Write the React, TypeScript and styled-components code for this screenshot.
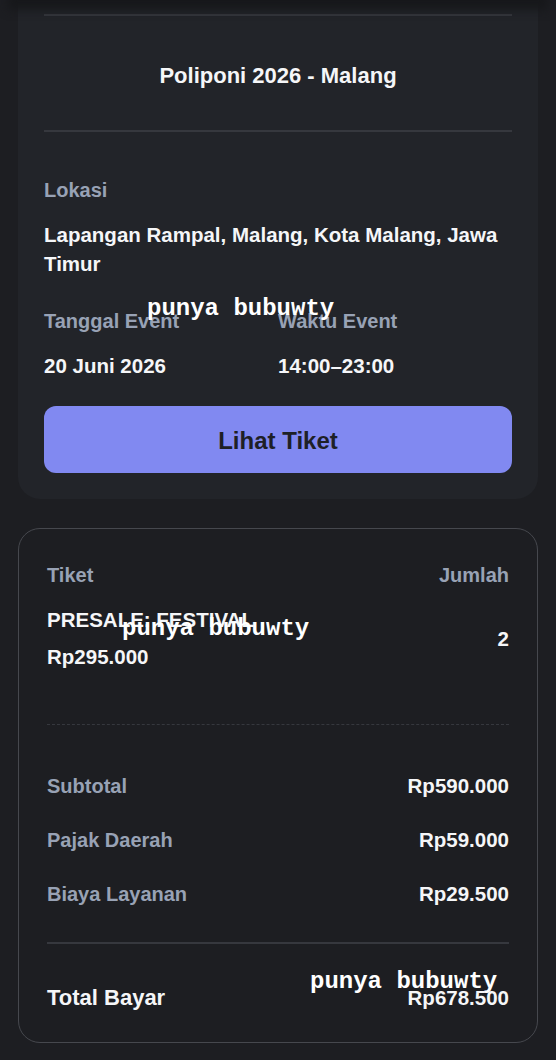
import React from 'react'
import styled, { createGlobalStyle } from 'styled-components'

const colors = {
  page: '#1d1e22',
  card: '#222429',
  line: '#36383e',
  border: '#46484e',
  label: '#98a2b5',
  white: '#f5f6f8',
  accent: '#8189f1',
  dark: '#1e2026',
}

const GlobalStyle = createGlobalStyle`
  * { box-sizing: border-box; }
  html, body {
    margin: 0;
    padding: 0;
    background: ${colors.page};
  }
  body {
    font-family: 'Liberation Sans', Arial, sans-serif;
    -webkit-font-smoothing: antialiased;
  }
`

const PageWrapper = styled.div`
  position: relative;
  min-height: 1060px;
  padding: 0 18px 20px;
  background: ${colors.page};
  overflow: hidden;
`

const TopShade = styled.div`
  height: 0;
  box-shadow: 0 0 10px 10px #17181b;
  position: relative;
  z-index: 1;
`

const EventCard = styled.section`
  background: ${colors.card};
  border-radius: 0 0 22px 22px;
  padding: 14px 26px 26px;
`

const TitleBlock = styled.div`
  border-top: 2px solid ${colors.line};
  border-bottom: 2px solid ${colors.line};
  padding: 46px 0 40px;
  text-align: center;
`

const Title = styled.h1`
  margin: 0;
  font-size: 22px;
  line-height: 28px;
  font-weight: 700;
  color: ${colors.white};
`

const InfoGrid = styled.div`
  display: grid;
  grid-template-columns: 1fr 1fr;
  row-gap: 31px;
  padding-top: 46px;
`

const InfoBlock = styled.div<{ $wide?: boolean }>`
  display: flex;
  flex-direction: column;
  gap: 18px;
  grid-column: ${({ $wide }) => ($wide ? '1 / -1' : 'auto')};
`

const Label = styled.div`
  font-size: 20px;
  line-height: 24px;
  font-weight: 700;
  color: ${colors.label};
`

const Value = styled.div<{ $size?: number }>`
  font-size: ${({ $size }) => $size || 20.5}px;
  line-height: 29px;
  font-weight: 700;
  color: ${colors.white};
`

const Button = styled.button`
  display: block;
  width: 100%;
  height: 67px;
  margin-top: 26px;
  border: none;
  border-radius: 12px;
  background: ${colors.accent};
  color: ${colors.dark};
  font-family: 'Liberation Sans', Arial, sans-serif;
  font-size: 24px;
  font-weight: 700;
  padding-top: 3px;
`

const SummaryCard = styled.section`
  margin-top: 29px;
  border: 1px solid ${colors.border};
  border-radius: 22px;
  padding: 34px 28px 30px;
  background: ${colors.page};
`

const Row = styled.div<{ $align?: string }>`
  display: flex;
  justify-content: space-between;
  align-items: ${({ $align }) => $align || 'center'};
`

const ItemRow = styled(Row)`
  margin-top: 18px;
  padding-bottom: 53px;
  border-bottom: 1px dashed ${colors.line};
`

const ItemInfo = styled.div`
  display: flex;
  flex-direction: column;
  gap: 8px;
`

const Costs = styled.div`
  display: flex;
  flex-direction: column;
  gap: 25px;
  padding: 46px 0 34px;
  border-bottom: 2px solid ${colors.line};
`

const TotalRow = styled(Row)`
  padding-top: 39px;
`

const Watermark = styled.span<{ $x: number; $y: number }>`
  position: absolute;
  left: ${({ $x }) => $x}px;
  top: ${({ $y }) => $y}px;
  font-family: 'Liberation Mono', 'Courier New', monospace;
  font-size: 24px;
  line-height: 24px;
  font-weight: 700;
  color: #ffffff;
  white-space: nowrap;
  pointer-events: none;
  z-index: 2;
`

const costs = [
  { label: 'Subtotal', value: 'Rp590.000' },
  { label: 'Pajak Daerah', value: 'Rp59.000' },
  { label: 'Biaya Layanan', value: 'Rp29.500' },
]

const marks = [
  { x: 147, y: 297 },
  { x: 122, y: 617 },
  { x: 310, y: 970 },
]

const App = (): JSX.Element => {
  return (
    <PageWrapper>
      <GlobalStyle />
      <TopShade />
      <EventCard>
        <TitleBlock>
          <Title>Poliponi 2026 - Malang</Title>
        </TitleBlock>
        <InfoGrid>
          <InfoBlock $wide>
            <Label>Lokasi</Label>
            <Value>Lapangan Rampal, Malang, Kota Malang, Jawa Timur</Value>
          </InfoBlock>
          <InfoBlock>
            <Label>Tanggal Event</Label>
            <Value>20 Juni 2026</Value>
          </InfoBlock>
          <InfoBlock>
            <Label>Waktu Event</Label>
            <Value>14:00–23:00</Value>
          </InfoBlock>
        </InfoGrid>
        <Button>Lihat Tiket</Button>
      </EventCard>

      <SummaryCard>
        <Row>
          <Label>Tiket</Label>
          <Label>Jumlah</Label>
        </Row>
        <ItemRow>
          <ItemInfo>
            <Value>PRESALE: FESTIVAL</Value>
            <Value>Rp295.000</Value>
          </ItemInfo>
          <Value>2</Value>
        </ItemRow>
        <Costs>
          {costs.map((c) => (
            <Row key={c.label}>
              <Label>{c.label}</Label>
              <Value>{c.value}</Value>
            </Row>
          ))}
        </Costs>
        <TotalRow>
          <Value $size={22}>Total Bayar</Value>
          <Value>Rp678.500</Value>
        </TotalRow>
      </SummaryCard>

      {marks.map((m, i) => (
        <Watermark key={i} $x={m.x} $y={m.y}>punya bubuwty</Watermark>
      ))}
    </PageWrapper>
  )
}

export default App
